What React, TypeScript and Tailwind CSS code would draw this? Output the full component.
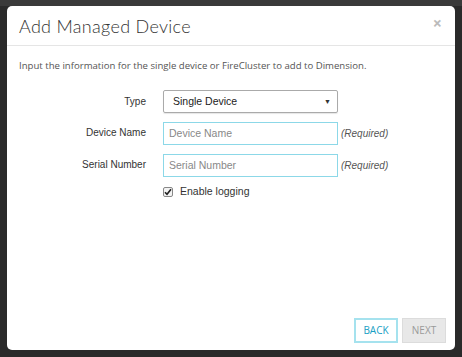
export default function App() {
  return (
    <div className="w-[462px] h-[357px] bg-[#2a2a2a] flex flex-col overflow-hidden font-['Open_Sans',sans-serif]">
      <div className="h-[6px] bg-[#3a3a3a] shrink-0" />
      <div className="flex-1 px-[7px] pb-[7px] flex">
        <div className="flex-1 bg-white rounded-[5px] flex flex-col">
          <div className="h-[40px] border-b border-[#e5e5e5] flex items-center justify-between pl-[12px] pr-[13px]">
            <h1 className="text-[18px] text-[#333] font-['Lato',sans-serif] font-light tracking-[0.3px] pt-[1px]">Add Managed Device</h1>
            <span className="text-[16px] text-[#bbb] font-bold leading-none mb-[5px]">×</span>
          </div>
          <p className="text-[9.6px] text-[#555] px-[12px] mt-[13px]">
            Input the information for the single device or FireCluster to add to Dimension.
          </p>
          <div className="mt-[17px] flex flex-col gap-[9px] font-['Liberation_Sans',Arial,sans-serif] text-[10px]">
            <div className="flex items-start">
              <label className="w-[139px] text-right text-[#333] pt-[4px]">Type</label>
              <div className="ml-[17px] w-[175px] h-[23px] border border-[#aaa] rounded-[2px] flex items-center justify-between pl-[9px] pr-[6px] shadow-[0_1px_1px_rgba(0,0,0,0.1)]">
                <span className="text-[10.5px] text-[#222]">Single Device</span>
                <span className="text-[7px] text-[#333]">▼</span>
              </div>
            </div>
            <div className="flex items-start">
              <label className="w-[139px] text-right text-[#333] pt-[3px]">Device Name</label>
              <div className="ml-[17px] w-[175px] h-[23px] border border-[#8cd8e8] flex items-center pl-[5px]">
                <span className="text-[10.5px] text-[#888]">Device Name</span>
              </div>
              <span className="ml-[3px] italic text-[#555] pt-[4px]">(Required)</span>
            </div>
            <div className="flex items-start">
              <label className="w-[139px] text-right text-[#333] pt-[3px]">Serial Number</label>
              <div className="ml-[17px] w-[175px] h-[23px] border border-[#8cd8e8] flex items-center pl-[5px]">
                <span className="text-[10.5px] text-[#888]">Serial Number</span>
              </div>
              <span className="ml-[3px] italic text-[#555] pt-[4px]">(Required)</span>
            </div>
            <div className="flex items-center ml-[156px] gap-[7px] -mt-[2px]">
              <div className="w-[10px] h-[10px] border border-[#888] rounded-[2px] bg-[#f3f3f3] flex items-center justify-center">
                <svg width="8" height="8" viewBox="0 0 8 8">
                  <path d="M1 4.2 L3 6.3 L7 1.2" stroke="#222" strokeWidth="1.6" fill="none" />
                </svg>
              </div>
              <span className="text-[10.5px] text-[#333]">Enable logging</span>
            </div>
          </div>
          <div className="flex-1" />
          <div className="flex justify-end gap-[4px] pr-[9px] pb-[7px] font-['Open_Sans',sans-serif] text-[10px]">
            <button className="w-[44px] h-[25px] border-2 border-[#a5e2ee] text-[#17a0c4] bg-white">BACK</button>
            <button className="w-[44px] h-[25px] border border-[#dcdcdc] bg-[#e8e8e8] text-[#9a9a9a]">NEXT</button>
          </div>
        </div>
      </div>
    </div>
  );
}
